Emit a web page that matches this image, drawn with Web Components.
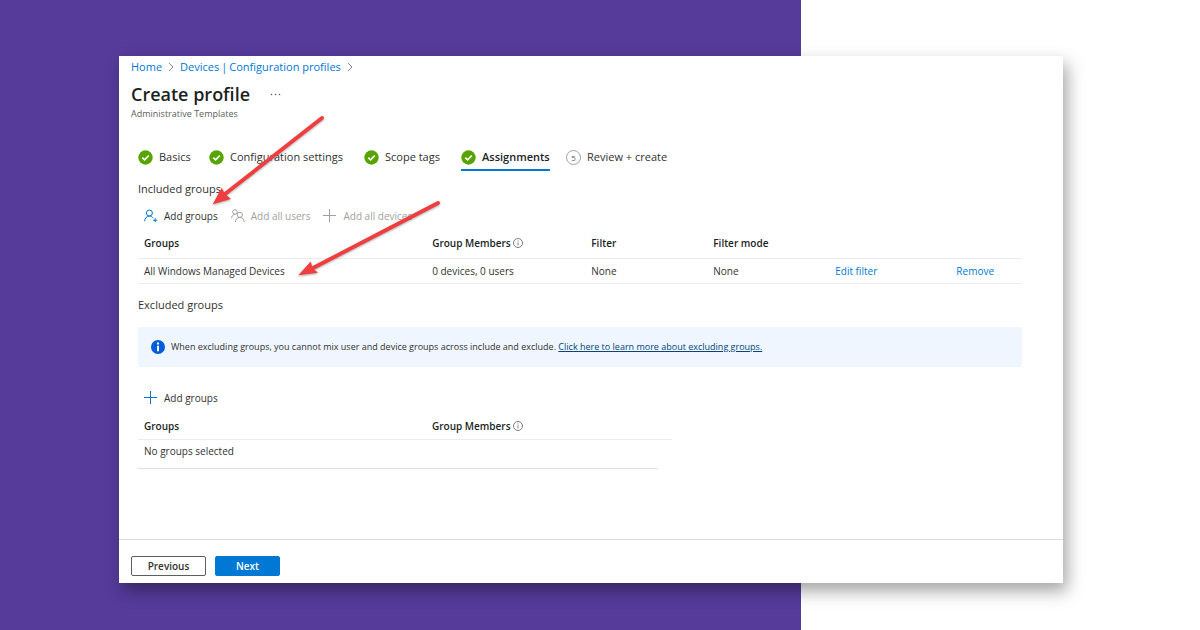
<!DOCTYPE html>
<html lang="en">
<head>
<meta charset="utf-8">
<meta name="viewport" content="width=device-width, initial-scale=1">
<title>Create profile</title>
<style>
  body { margin: 0; font: 11px/16px "Open Sans", "Noto Sans", sans-serif; color: #323130; }
</style>
</head>
<body>
<app-stage>
  <profile-card>
    <crumb-trail></crumb-trail>
    <page-title heading="Create profile" sub="Administrative Templates"></page-title>
    <wizard-steps></wizard-steps>
    <group-section heading="Included groups">
      <command-bar slot="tools">
        <command-button icon="person">Add groups</command-button>
        <command-button icon="people" disabled>Add all users</command-button>
        <command-button icon="plus" disabled>Add all devices</command-button>
      </command-bar>
      <included-table></included-table>
    </group-section>
    <group-section heading="Excluded groups" class="excluded">
      <info-banner slot="tools">When excluding groups, you cannot mix user and device groups across include and exclude.</info-banner>
      <command-bar slot="tools">
        <command-button icon="plus">Add groups</command-button>
      </command-bar>
      <excluded-table></excluded-table>
    </group-section>
    <wizard-footer slot="footer"></wizard-footer>
    <pointer-arrows slot="overlay"></pointer-arrows>
  </profile-card>
</app-stage>

<script>
const define = (name, html) => customElements.define(name, class extends HTMLElement {
  constructor() {
    super();
    const t = document.createElement('template');
    t.innerHTML = typeof html === 'function' ? html(this) : html;
    this.attachShadow({ mode: 'open' }).append(t.content.cloneNode(true));
  }
});

const chevron = '<svg width="6" height="10" viewBox="0 0 6 10" fill="none" stroke="#8a8886" aria-hidden="true"><path d="M1 1l4 4-4 4"/></svg>';
const check = '<svg width="15" height="15" viewBox="0 0 15 15" aria-hidden="true"><circle cx="7.5" cy="7.5" r="7.2" fill="#57a300"/><path d="M4.3 7.6l2.3 2.3 4.2-4.4" fill="none" stroke="#fff" stroke-width="1.7"/></svg>';
const info = '<svg width="10" height="10" viewBox="0 0 10 10" aria-hidden="true"><circle cx="5" cy="5" r="4.5" fill="none" stroke="#605e5c" stroke-width=".8"/><path d="M5 4.4v3M5 2.5v1" stroke="#605e5c" stroke-width=".8"/></svg>';
const icons = {
  person: '<g stroke="#0078d4"><circle cx="5.4" cy="4" r="3"/><path d="M.6 12.2C.9 9 2.8 7.1 5.4 7.1c1.7 0 3 .8 3.8 2.1M11.2 9.2v4M9.2 11.2h4"/></g>',
  people: '<g stroke="#a19f9d"><circle cx="4" cy="3" r="2.3"/><path d="M.6 9.2C.8 6.9 2 5.4 4 5.4"/><circle cx="8.8" cy="5.8" r="2.6"/><path d="M4.4 13c.2-2.8 1.9-4.5 4.4-4.5s4.2 1.7 4.4 4.5"/></g>',
  plus: '<path d="M6.5 0v13M0 6.5h13" stroke="var(--plus)"/>'
};
const tableCss = `
  :host { display: block; }
  table { border-collapse: collapse; table-layout: fixed; width: 100%; font-size: 10px; line-height: 16px; }
  th { text-align: left; font-weight: 600; color: #201f1e; height: 30px; }
  th, td { padding: 0 0 0 6px; border-bottom: 1px solid #edebe9; box-sizing: border-box; white-space: nowrap; }
  .hint { display: flex; align-items: center; gap: 2px; }
  a { color: #0078d4; text-decoration: none; }`;

define('app-stage', `<style>
  :host { display: block; box-sizing: border-box; min-height: 100vh; padding: 56px 137px 47px 119px;
    background: linear-gradient(to right, #563b9b 66.75%, #fff 66.75%); }
</style><slot></slot>`);

define('profile-card', `<style>
  :host { display: flex; flex-direction: column; position: relative; background: #fff; min-height: 527px;
    box-shadow: 4px 8px 16px rgba(0,0,0,.36); }
  main { flex: 1; padding: 3px 41px 0 12px; }
</style><main><slot></slot></main><slot name="footer"></slot><slot name="overlay"></slot>`);

define('crumb-trail', `<style>
  :host { display: block; }
  nav { display: flex; align-items: center; gap: 6px; }
  span { display: flex; gap: 2px; color: #0078d4; }
  a { color: #0078d4; text-decoration: none; }
</style><nav aria-label="Breadcrumb"><a href="#home">Home</a>${chevron}<span><a href="#devices">Devices</a>|<a href="#profiles">Configuration profiles</a></span>${chevron}</nav>`);

define('page-title', el => `<style>
  :host { display: block; }
  header { display: flex; align-items: center; gap: 20px; padding-top: 7px; }
  h1 { margin: 0; font-size: 18px; line-height: 24px; font-weight: 600; color: #201f1e; }
  button { border: 0; padding: 0; background: none; display: flex; }
  p { margin: 0; font-size: 9px; line-height: 16px; color: #605e5c; }
</style><header><h1>${el.getAttribute('heading')}</h1><button aria-label="More"><svg width="11" height="3" viewBox="0 0 11 3" fill="#605e5c"><circle cx="1.5" cy="1.5" r=".8"/><circle cx="5.5" cy="1.5" r=".8"/><circle cx="9.5" cy="1.5" r=".8"/></svg></button></header><p>${el.getAttribute('sub')}</p>`);

define('wizard-steps', `<style>
  :host { display: block; padding: 23px 0 0 7px; }
  ol { list-style: none; margin: 0; padding: 0; display: grid; grid-template-columns: 71px 155px 97px 105px max-content; }
  a { display: inline-flex; align-items: center; gap: 6px; height: 24px; color: #323130; text-decoration: none; white-space: nowrap; border-bottom: 2px solid transparent; }
  a[aria-current] { font-weight: 600; color: #201f1e; border-color: #0078d4; }
  i { box-sizing: border-box; width: 15px; height: 15px; border: 1px solid #a19f9d; border-radius: 50%; font-style: normal; font-size: 8px; line-height: 13px; text-align: center; color: #605e5c; }
</style><ol>
  <li><a href="#basics">${check}<span>Basics</span></a></li>
  <li><a href="#settings">${check}<span>Configuration settings</span></a></li>
  <li><a href="#scope">${check}<span>Scope tags</span></a></li>
  <li><a href="#assignments" aria-current="step">${check}<span>Assignments</span></a></li>
  <li><a href="#review"><i>5</i><span>Review + create</span></a></li>
</ol>`);

define('group-section', el => `<style>
  :host { display: block; padding: 10px 0 0 7px; }
  :host(.excluded) { padding-top: 13px; }
  h2 { margin: 0; font-size: 11px; line-height: 16px; font-weight: 400; }
</style><h2>${el.getAttribute('heading')}</h2><slot name="tools"></slot><slot></slot>`);

define('command-bar', `<style>
  :host { display: flex; gap: 13px; padding: 11px 6px 4px; font-size: 10px; }
</style><slot></slot>`);

define('command-button', el => `<style>
  :host { display: block; --plus: #0078d4; }
  :host([disabled]) { --plus: #a19f9d; }
  button { display: flex; align-items: center; gap: 6px; padding: 0; border: 0; background: none; font: inherit; color: #323130; white-space: nowrap; }
  button:disabled { color: #a19f9d; }
</style><button ${el.hasAttribute('disabled') ? 'disabled' : ''}><svg width="14" height="14" viewBox="0 0 14 14" fill="none" aria-hidden="true">${icons[el.getAttribute('icon')]}</svg><slot></slot></button>`);

define('included-table', `<style>${tableCss} td { height: 25px; }</style>
<table>
  <colgroup><col style="width:32.6%"><col style="width:18%"><col style="width:13.8%"><col style="width:13.8%"><col style="width:13.7%"><col></colgroup>
  <thead><tr><th>Groups</th><th><span class="hint">Group Members ${info}</span></th><th>Filter</th><th>Filter mode</th><th></th><th></th></tr></thead>
  <tbody><tr><td>All Windows Managed Devices</td><td>0 devices, 0 users</td><td>None</td><td>None</td><td><a href="#edit">Edit filter</a></td><td><a href="#remove">Remove</a></td></tr></tbody>
</table>`);

define('info-banner', `<style>
  :host { display: flex; align-items: center; gap: 6px; margin: 14px 0 12px; padding: 0 13px; min-height: 40px; background: #f0f6ff; border-radius: 2px; font-size: 9px; line-height: 14px; }
  svg { flex: none; }
  a { color: #004578; }
</style><svg width="14" height="14" viewBox="0 0 14 14" aria-hidden="true"><circle cx="7" cy="7" r="7" fill="#015cda"/><path d="M7 2.5v2M7 5.8v5.4" stroke="#fff" stroke-width="2"/></svg><span><slot></slot> <a href="#learn">Click here to learn more about excluding groups.</a></span>`);

define('excluded-table', `<style>${tableCss}
  :host { max-width: 534px; }
  th { padding-top: 4px; }
  td { height: 29px; padding-bottom: 6px; border-color: #e1dfdd; }
  td:last-child { border: 0; }</style>
<table>
  <colgroup><col style="width:288px"><col><col style="width:14px"></colgroup>
  <thead><tr><th>Groups</th><th><span class="hint">Group Members ${info}</span></th><th></th></tr></thead>
  <tbody><tr><td colspan="2">No groups selected</td><td></td></tr></tbody>
</table>`);

define('wizard-footer', `<style>
  :host { display: flex; gap: 9px; padding: 16px 12px 7px; border-top: 1px solid #dcdcdc; }
  button { box-sizing: border-box; height: 20px; padding: 0; border: 1px solid #605e5c; border-radius: 2px; background: #fff; font: 600 10px/16px "Open Sans", "Noto Sans", sans-serif; color: #323130; width: 75px; }
  .primary { width: 65px; background: #0078d4; border-color: #0078d4; color: #fff; }
</style><button>Previous</button><button class="primary">Next</button>`);

define('pointer-arrows', `<style>
  :host { position: absolute; top: 0; left: 0; pointer-events: none; }
  svg { display: block; filter: drop-shadow(0 1px 1px rgba(0,0,0,.35)); }
</style><svg width="340" height="240" viewBox="119 56 340 240" aria-hidden="true">
  <g fill="#f03e3e" stroke="#f03e3e">
    <path d="M322 118L225 194" stroke-width="3.8" stroke-linecap="round"/>
    <path d="M212.7 204.3L221.7 187.7 225 194 231 199Z" stroke="none"/>
    <path d="M438 203L312 268.5" stroke-width="3.8" stroke-linecap="round"/>
    <path d="M298.3 275.3L310.7 261.5 312.5 268 318 272.8Z" stroke="none"/>
  </g>
</svg>`);
</script>
</body>
</html>
